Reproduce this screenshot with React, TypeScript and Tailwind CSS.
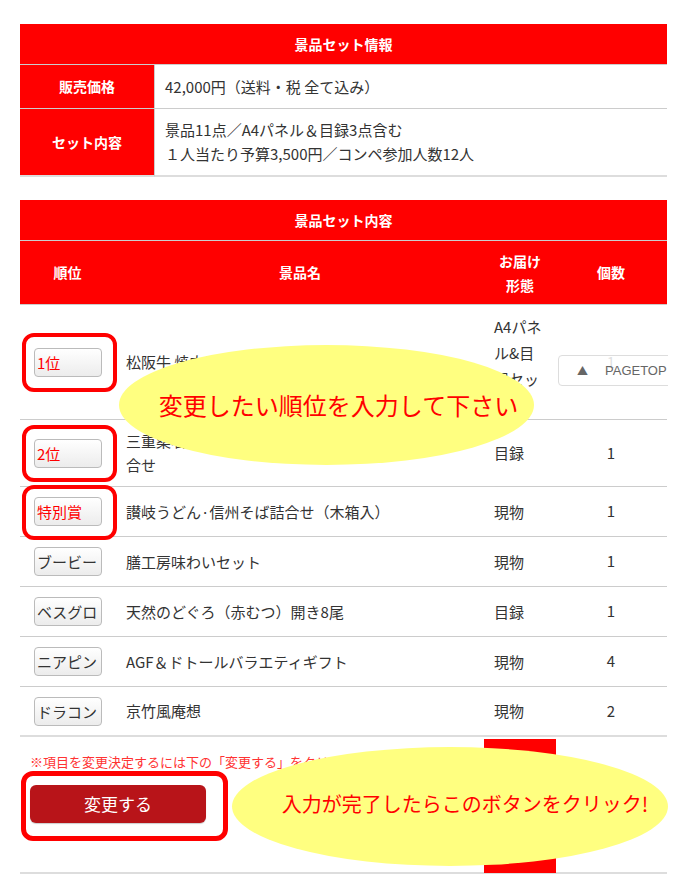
import React from "react";

type Row = {
  rank: string;
  hl: boolean;
  name: React.ReactNode;
  form: React.ReactNode;
  qty: string;
  h: string;
  box?: string;
};

const rows: Row[] = [
  {
    rank: "1位",
    hl: true,
    name: "松阪牛 焼肉用 モモ・バラ 500g",
    form: "A4パネル&目録セット",
    qty: "1",
    h: "h-[114px]",
    box: "-top-[15px] h-[59px]",
  },
  {
    rank: "2位",
    hl: true,
    name: (
      <>
        三重桑名産はまぐり＆伊勢志摩あおさ海苔佃煮詰
        <br />
        合せ
      </>
    ),
    form: "目録",
    qty: "1",
    h: "h-[67px]",
    box: "-top-[14px] h-[57px]",
  },
  {
    rank: "特別賞",
    hl: true,
    name: "讃岐うどん·信州そば詰合せ（木箱入）",
    form: "現物",
    qty: "1",
    h: "h-[50px]",
    box: "-top-[12px] h-[55px]",
  },
  { rank: "ブービー", hl: false, name: "膳工房味わいセット", form: "現物", qty: "1", h: "h-[50px]" },
  { rank: "ベスグロ", hl: false, name: "天然のどぐろ（赤むつ）開き8尾", form: "目録", qty: "1", h: "h-[50px]" },
  { rank: "ニアピン", hl: false, name: "AGF＆ドトールバラエティギフト", form: "現物", qty: "4", h: "h-[50px]" },
  { rank: "ドラコン", hl: false, name: "京竹風庵想", form: "現物", qty: "2", h: "h-[50px]" },
];

export default function App() {
  return (
    <div className="w-[690px] h-[885px] bg-white text-[#333] font-['Noto_Sans_CJK_JP','Noto_Sans',sans-serif]">
      <div className="relative ml-[20px] w-[648px] h-[885px] overflow-hidden pt-[24px]">
        {/* Table 1 */}
        <table className="w-[647px] table-fixed border-separate border-spacing-0 text-[15px]">
          <colgroup>
            <col className="w-[135px]" />
            <col />
          </colgroup>
          <tbody>
            <tr>
              <th
                colSpan={2}
                className="h-[41px] bg-[#ff0000] text-white font-bold text-[14px] text-center border-b border-[#ccc]"
              >
                景品セット情報
              </th>
            </tr>
            <tr>
              <th className="h-[44px] bg-[#ff0000] text-white font-bold text-[14px] text-center border-r border-b border-[#ccc]">
                販売価格
              </th>
              <td className="pl-[10px] border-b border-[#ccc] leading-[24px]">42,000円（送料・税 全て込み）</td>
            </tr>
            <tr>
              <th className="h-[68px] bg-[#ff0000] text-white font-bold text-[14px] text-center border-r border-[#ccc] border-b-2 border-b-[#ddd]">
                セット内容
              </th>
              <td className="pl-[10px] border-b-2 border-[#ddd] leading-[24px]">
                景品11点／A4パネル＆目録3点含む
                <br />
                １人当たり予算3,500円／コンペ参加人数12人
              </td>
            </tr>
          </tbody>
        </table>

        {/* Table 2 */}
        <table className="mt-[23px] w-[647px] table-fixed border-separate border-spacing-0 text-[15px]">
          <colgroup>
            <col className="w-[95px]" />
            <col className="w-[370px]" />
            <col className="w-[70px]" />
            <col />
          </colgroup>
          <thead>
            <tr>
              <th
                colSpan={4}
                className="h-[41px] bg-[#ff0000] text-white font-bold text-[14px] text-center border-b border-[#ccc]"
              >
                景品セット内容
              </th>
            </tr>
            <tr className="bg-[#ff0000] text-white font-bold text-[14px]">
              <th className="h-[64px] text-center border-b border-[#ccc]">順位</th>
              <th className="text-center border-b border-[#ccc]">景品名</th>
              <th className="text-center leading-[24px] border-b border-[#ccc]">
                お届け
                <br />
                形態
              </th>
              <th className="text-center border-b border-[#ccc]">個数</th>
            </tr>
          </thead>
          <tbody>
            {rows.map((r, i) => {
              const last = i === rows.length - 1;
              const b = last ? "border-b-2 border-[#ddd]" : "border-b border-[#ccc]";
              return (
                <tr key={i}>
                  <td className={`${r.h} pl-[14px] ${b}`}>
                    <div className="relative w-[68px] h-[29px]">
                      <input
                        readOnly
                        value={r.rank}
                        className={`w-[68px] h-[29px] rounded-[4px] border border-[#bbb] bg-gradient-to-b from-[#ffffff] to-[#ececec] px-[2px] text-[15px] leading-[27px] outline-none ${
                          r.hl ? "text-[#ff0000]" : "text-[#333]"
                        }`}
                      />
                      {r.hl && (
                        <div
                          className={`absolute -left-[12px] ${r.box} w-[95px] rounded-[12px] border-[4px] border-[#ff0000] pointer-events-none`}
                        />
                      )}
                    </div>
                  </td>
                  <td className={`pl-[11px] pr-[6px] leading-[24px] ${b}`}>{r.name}</td>
                  <td className={`pl-[9px] pr-[7px] leading-[26px] ${i === 0 ? "pt-[9px] pb-[1px]" : ""} ${b}`}>
                    {r.form}
                  </td>
                  <td className={`text-center ${b}`}>{r.qty}</td>
                </tr>
              );
            })}
          </tbody>
        </table>

        {/* Bottom section */}
        <div className="pl-[10px] pt-[16px]">
          <p className="text-[13px] leading-[18px] text-[#ff3333]">
            ※項目を変更決定するには下の「変更する」をクリックしてください。
          </p>
          <div className="relative mt-[14px] w-[176px] h-[38px]">
            <button className="w-[176px] h-[38px] rounded-[6px] bg-[#b81419] text-white text-[17px] shadow-[0_1px_1px_rgba(0,0,0,0.2)]">
              変更する
            </button>
            <div className="absolute -left-[9px] -top-[14px] w-[207px] h-[70px] rounded-[12px] border-[5px] border-[#ff0000] pointer-events-none" />
          </div>
        </div>
        <div className="mt-[49px] w-[647px] border-b-2 border-[#ddd]" />

        {/* Red bar behind second note */}
        <div className="absolute left-[464px] top-[739px] w-[72px] h-[134px] bg-[#ff0000]" />

        {/* PAGETOP floating button */}
        <div className="absolute left-[538px] top-[355px] w-[150px] h-[31px] rounded-[4px] border border-[#ddd] bg-white/85 flex items-center pl-[18px] text-[#666]">
          <span className="text-[11px]">▲</span>
          <span className="ml-[17px] text-[13px] font-['Liberation_Sans',sans-serif]">PAGETOP</span>
        </div>

        {/* Annotation ellipse 1 */}
        <div className="absolute left-[99px] top-[345px] w-[415px] h-[120px] rounded-[50%] bg-[#ffff80] flex items-center justify-center pl-[24px] text-[24px] text-[#ff0000]">
          変更したい順位を入力して下さい
        </div>

        {/* Annotation ellipse 2 */}
        <div className="absolute left-[212px] top-[747px] w-[436px] h-[119px] rounded-[50%] bg-[#ffff80] flex items-center justify-center pl-[30px] pb-[6px] text-[20px] text-[#ff0000]">
          入力が完了したらこのボタンをクリック!
        </div>
      </div>
    </div>
  );
}
